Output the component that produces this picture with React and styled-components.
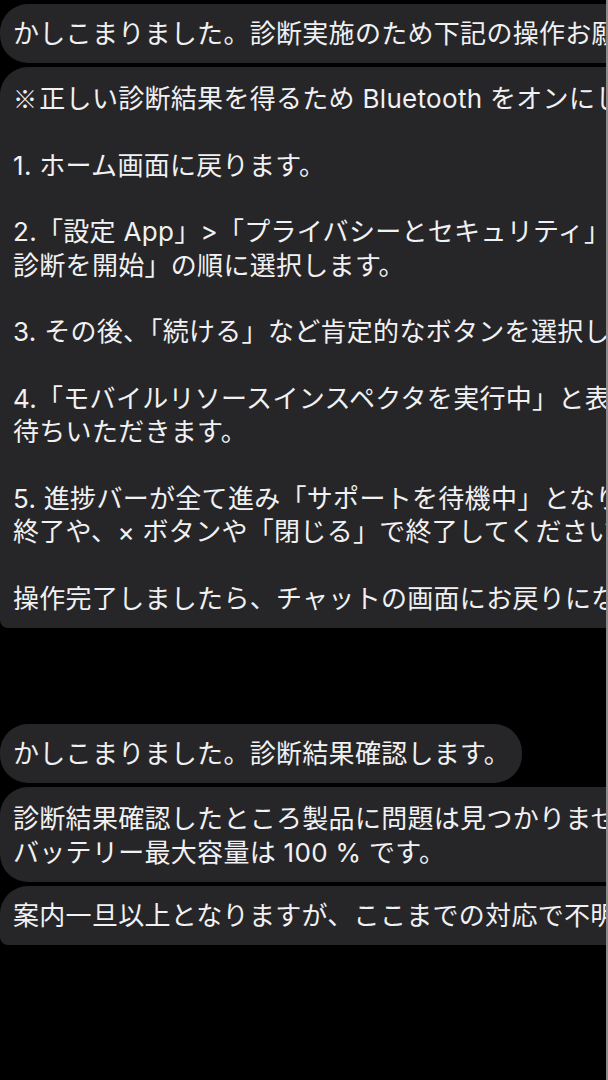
import React from 'react';
import styled, { createGlobalStyle } from 'styled-components';

const GlobalStyle = createGlobalStyle`
    html, body {
        margin: 0;
        padding: 0;
        background: #000000;
    }
`;

const messages = [
    {
        id: 1,
        group: 1,
        lines: ['かしこまりました。診断実施のため下記の操作お願いいたします。'],
    },
    {
        id: 2,
        group: 1,
        tail: true,
        lines: [
            '※正しい診断結果を得るため Bluetooth をオンにしてください。',
            '',
            '1. ホーム画面に戻ります。',
            '',
            '2.「設定 App」>「プライバシーとセキュリティ」>「解析および改善」>「',
            '診断を開始」の順に選択します。',
            '',
            '3. その後、「続ける」など肯定的なボタンを選択してください。',
            '',
            '4.「モバイルリソースインスペクタを実行中」と表示されますので、お',
            '待ちいただきます。',
            '',
            '5. 進捗バーが全て進み「サポートを待機中」となりましたら、ホーム画面で',
            '終了や、× ボタンや「閉じる」で終了してください。',
            '',
            '操作完了しましたら、チャットの画面にお戻りになりお知らせください。',
        ],
    },
    {
        id: 3,
        group: 2,
        lines: ['かしこまりました。診断結果確認します。'],
    },
    {
        id: 4,
        group: 2,
        lines: [
            '診断結果確認したところ製品に問題は見つかりませんでした。',
            'バッテリー最大容量は 100 % です。',
        ],
    },
    {
        id: 5,
        group: 2,
        tail: true,
        lines: ['案内一旦以上となりますが、ここまでの対応で不明点などございますか。'],
    },
];

function Line({ text }) {
    if (!text) return <StLine>{'\u00a0'}</StLine>;
    if (text.startsWith('※')) {
        return (
            <StLine>
                <StMark>※</StMark>
                {text.slice(1)}
            </StLine>
        );
    }
    return <StLine>{text}</StLine>;
}

function App() {
    const groups = [1, 2];
    return (
        <>
            <GlobalStyle />
            <StPage>
                <StThread>
                    {groups.map((g) => (
                        <StGroup key={g}>
                            {messages
                                .filter((m) => m.group === g)
                                .map((m) => (
                                    <StBubble key={m.id} $tail={m.tail}>
                                        {m.lines.map((line, i) => (
                                            <Line key={i} text={line} />
                                        ))}
                                    </StBubble>
                                ))}
                        </StGroup>
                    ))}
                </StThread>
            </StPage>
        </>
    );
}

const StPage = styled.div`
    width: 606px;
    height: 1080px;
    overflow: hidden;
    background: #000000;
    border-right: 2px solid #8c8c8e;
`;
const StThread = styled.div`
    display: flex;
    flex-direction: column;
    gap: 96px;
    padding-top: 4px;
`;
const StGroup = styled.div`
    display: flex;
    flex-direction: column;
    align-items: flex-start;
    gap: 4px;
`;
const StBubble = styled.div`
    width: max-content;
    background: #262629;
    color: #f1f1f3;
    font-family: Inter, 'Noto Sans CJK JP', sans-serif;
    font-size: 26px;
    letter-spacing: 0.3px;
    line-height: 33.3px;
    white-space: nowrap;
    padding: 13px 12px 13px 13px;
    border-radius: 28px;
    border-bottom-left-radius: ${(p) => (p.$tail ? '8px' : '28px')};
    &:nth-child(2) {
        padding-top: 15px;
    }
`;
const StLine = styled.div`
    height: 33.3px;
`;
const StMark = styled.span`
    font-family: 'Noto Sans CJK JP', sans-serif;
    font-size: 24px;
    line-height: 1;
    margin-right: 2px;
`;

export default App;
